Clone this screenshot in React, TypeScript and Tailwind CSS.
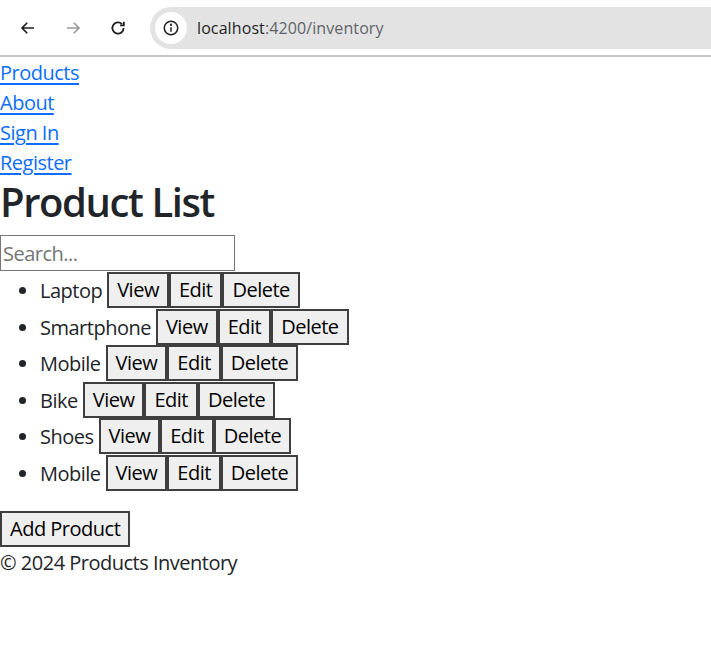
import React from "react";

const products = ["Laptop", "Smartphone", "Mobile", "Bike", "Shoes", "Mobile"];

const navLinks = ["Products", "About", "Sign In", "Register"];

function BrowserBar() {
  return (
    <div className="flex h-[57px] items-center border-b-2 border-[#c7c7c7] bg-white">
      {/* back */}
      <div className="flex w-[54px] justify-center pl-[2px]">
        <svg width="18" height="18" viewBox="0 0 24 24" fill="none" stroke="#1f1f1f" strokeWidth="2.2">
          <path d="M20 12H5M11 5l-7 7 7 7" />
        </svg>
      </div>
      {/* forward */}
      <div className="flex w-[38px] justify-center">
        <svg width="18" height="18" viewBox="0 0 24 24" fill="none" stroke="#9a9a9a" strokeWidth="2.2">
          <path d="M4 12h15M13 5l7 7-7 7" />
        </svg>
      </div>
      {/* reload */}
      <div className="flex w-[52px] justify-center">
        <svg width="18" height="18" viewBox="0 0 24 24" fill="none" stroke="#1f1f1f" strokeWidth="2.4">
          <path d="M19.5 12a7.5 7.5 0 1 1-2.2-5.3" />
          <path d="M19.8 3.5v5h-5" fill="none" />
        </svg>
      </div>
      <div className="ml-[6px] flex h-[42px] flex-1 items-center rounded-l-full bg-[#e3e3e3] pl-[5px]">
        <div className="flex h-[32px] w-[32px] items-center justify-center rounded-full bg-white">
          <svg width="18" height="18" viewBox="0 0 24 24" fill="none" stroke="#1f1f1f" strokeWidth="2">
            <circle cx="12" cy="12" r="9" />
            <path d="M12 11v6" />
            <circle cx="12" cy="7.6" r="0.6" fill="#1f1f1f" />
          </svg>
        </div>
        <span className="ml-[10px] font-['Open_Sans',sans-serif] text-[16px] tracking-[0.1px] text-[#1f1f1f]">
          localhost<span className="text-[#5f6368]">:4200/inventory</span>
        </span>
      </div>
    </div>
  );
}

const btn = "h-[36px] border-2 border-[#3f3f3f] bg-[#efefef] px-[8px] text-black";

export default function App() {
  return (
    <div className="min-h-[648px] w-[711px] bg-white font-['Open_Sans',sans-serif] text-[20px] leading-[30px] tracking-[-0.5px] text-[#212529]">
      <BrowserBar />
      <nav className="mt-[1px]">
        {navLinks.map((link) => (
          <a key={link} href="#" className="block w-fit text-[#0d6efd] underline underline-offset-[3px]">
            {link}
          </a>
        ))}
      </nav>
      <h1 className="h-[48px] text-[40px] font-semibold leading-[48px] tracking-[-1.4px]">Product List</h1>
      <input
        type="text"
        placeholder="Search..."
        className="mt-[9px] h-[36px] w-[235px] border border-[#767676] px-[2px] text-[20px] placeholder:text-[#757575] outline-none"
      />
      <ul className="mb-[20px] mt-[1px] list-disc pl-[40px]">
        {products.map((name, index) => (
          <li key={index} className="h-[36.5px]">
            <div className="flex h-[36.5px] items-center">
              <span className="mr-[5px] pt-[2px]">{name}</span>
              <button className={btn}>View</button>
              <button className={btn}>Edit</button>
              <button className={btn}>Delete</button>
            </div>
          </li>
        ))}
      </ul>
      <button className={btn}>Add Product</button>
      <footer className="mt-[1px]">© 2024 Products Inventory</footer>
    </div>
  );
}
